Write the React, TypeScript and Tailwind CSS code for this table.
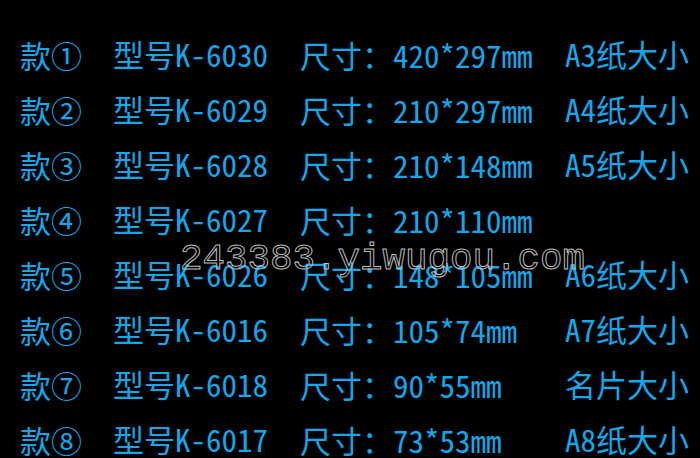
import React from "react";

const rows = [
  ["款①", "型号", "K-6030", "420*297mm", "A3", "纸大小"],
  ["款②", "型号", "K-6029", "210*297mm", "A4", "纸大小"],
  ["款③", "型号", "K-6028", "210*148mm", "A5", "纸大小"],
  ["款④", "型号", "K-6027", "210*110mm", "", ""],
  ["款⑤", "型号", "K-6026", "148*105mm", "A6", "纸大小"],
  ["款⑥", "型号", "K-6016", "105*74mm", "A7", "纸大小"],
  ["款⑦", "型号", "K-6018", "90*55mm", "", "名片大小"],
  ["款⑧", "型号", "K-6017", "73*53mm", "A8", "纸大小"],
];

const cjk = "font-['Noto_Sans_CJK_SC',sans-serif]";
const mono = "font-['Noto_Sans_Mono_CJK_SC','Noto_Sans_CJK_SC',monospace]";

export default function App() {
  return (
    <div className="relative w-[700px] h-[458px] overflow-hidden bg-black text-[#14a7ea] text-[31px] leading-[55px]">
      <div className="flex flex-col pt-[26px] pl-[20px]">
        {rows.map((r, i) => (
          <div key={i} className="grid grid-cols-[93px_187px_93px_172px_auto] h-[55px] items-center whitespace-nowrap">
            <span className={cjk}>{r[0]}</span>
            <span>
              <span className={cjk}>{r[1]}</span>
              <span className={mono}>{r[2]}</span>
            </span>
            <span className={cjk}>尺寸：</span>
            <span className={mono}>{r[3]}</span>
            <span>
              {r[4] && <span className={mono}>{r[4]}</span>}
              <span className={cjk}>{r[5]}</span>
            </span>
          </div>
        ))}
      </div>
      <div className="absolute left-[180px] top-[239px] text-[37.5px] leading-[40px] font-['Liberation_Mono',monospace] text-transparent [-webkit-text-stroke:1px_#bdbdbd] whitespace-nowrap">
        243383.yiwugou.com
      </div>
    </div>
  );
}
